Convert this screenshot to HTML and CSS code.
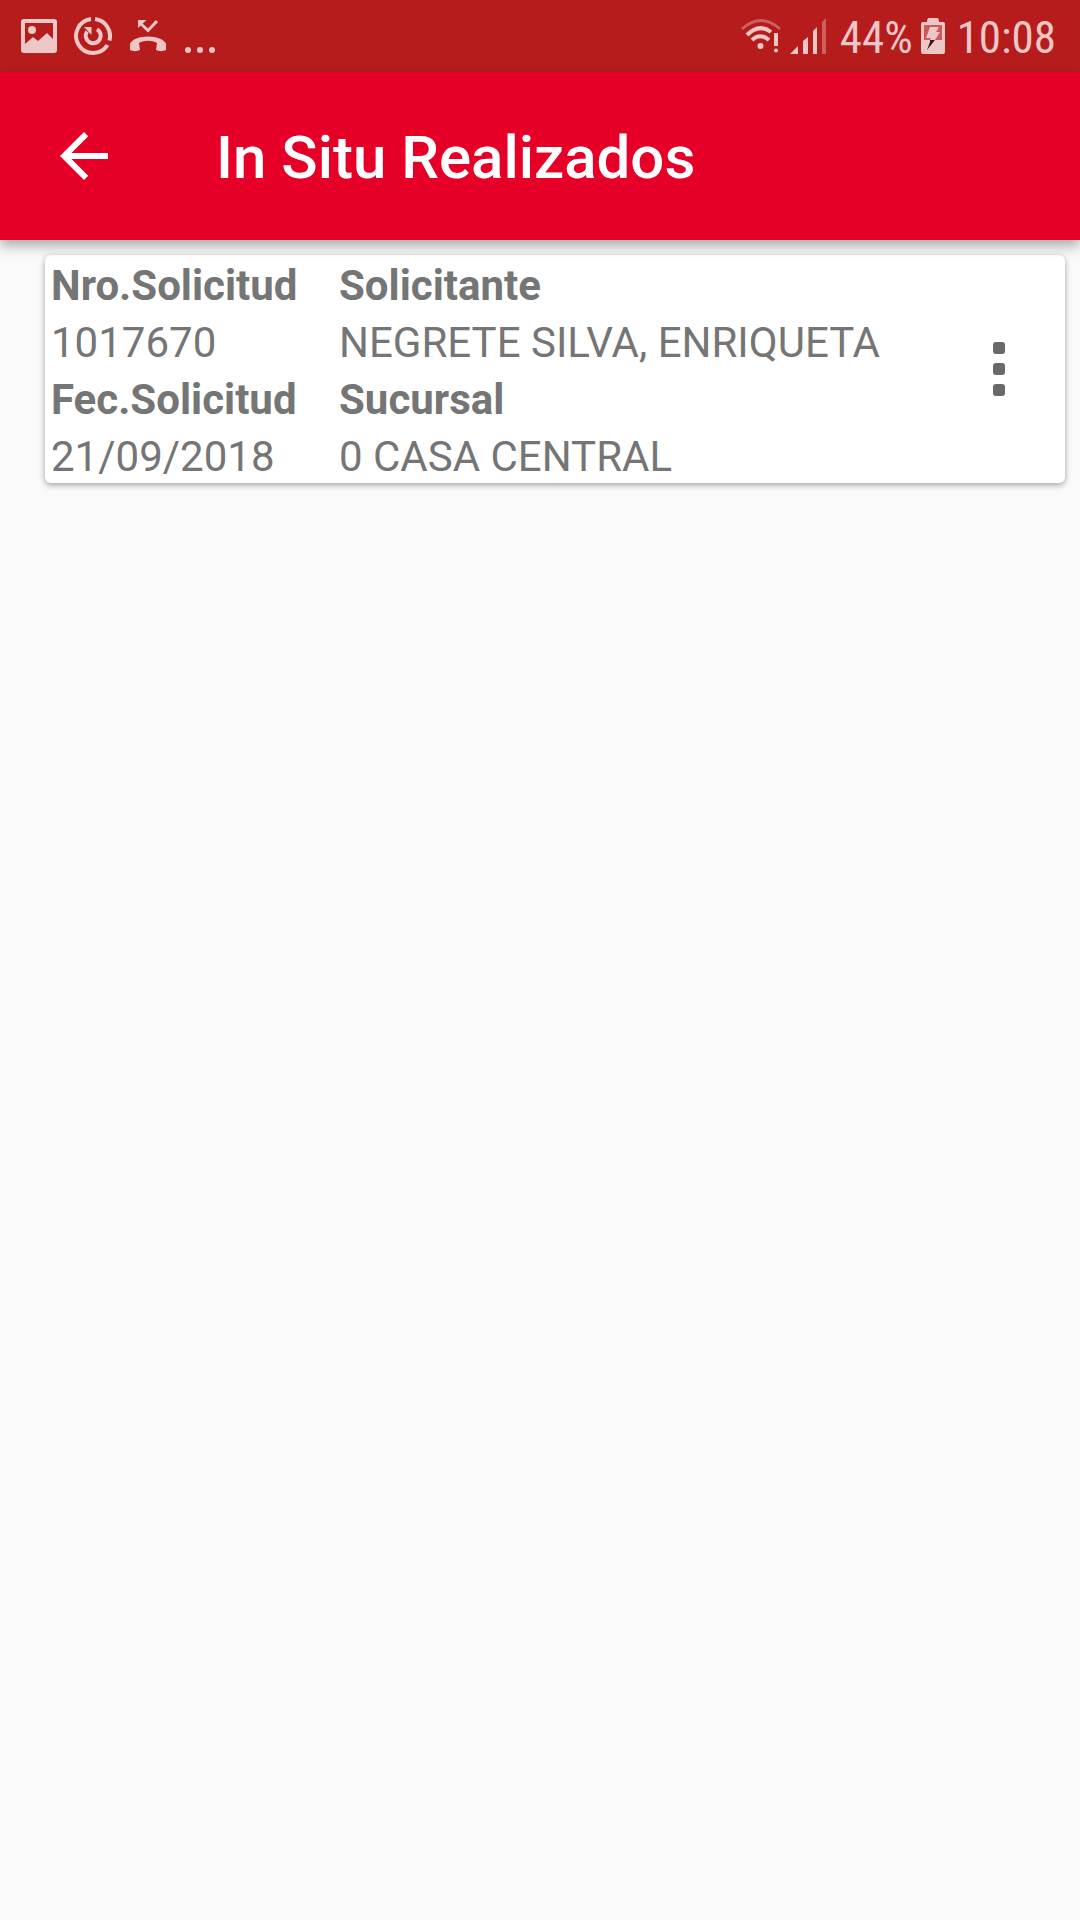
FILE: index.html
```html
<!DOCTYPE html>
<html lang="es">
<head>
<meta charset="utf-8">
<meta name="viewport" content="width=device-width, initial-scale=1">
<title>In Situ Realizados</title>
<link rel="stylesheet" href="styles.css">
</head>
<body>
<div class="status-bar">
  <div class="status-notifications">
    <svg width="36" height="36" viewBox="0 0 36 36" aria-hidden="true">
      <path fill="currentColor" fill-rule="evenodd" d="M3 1H33Q36 1 36 4V32Q36 35 33 35H3Q0 35 0 32V4Q0 1 3 1ZM4 5V26L12 19L17 23L26 15L32 21V5Z"/>
      <circle cx="11" cy="12" r="4" fill="currentColor"/>
    </svg>
    <svg width="38" height="38" viewBox="0 0 38 38" fill="none" stroke="currentColor" stroke-width="4" aria-hidden="true">
      <path d="M17 2.1A17 17 0 1 0 33.5 28"/>
      <path d="M21 2.1A17 17 0 0 1 35.400 23.500"/>
      <path d="M23 12.200A7.500 7.500 0 1 1 13 14.500" />
      <path d="M10 10H17.500V18Z" fill="currentColor" stroke="none"/>
    </svg>
    <svg width="38" height="38" viewBox="0 0 38 38" aria-hidden="true">
      <path d="M1 33V27C2 23 10 19.500 19 19.500S36 23 37 27V33C34 34.500 30 34.500 27 33L28 26C23 23 15 23 10 26L11 33C8 34.500 4 34.500 1 33Z" fill="currentColor"/>
      <path d="M11 6L19 13.500L28 4" fill="none" stroke="currentColor" stroke-width="3"/>
      <path d="M9 3H17.500L9 11Z" fill="currentColor"/>
    </svg>
    <svg width="32" height="36" viewBox="0 0 32 36" fill="currentColor" aria-hidden="true">
      <circle cx="4" cy="32" r="3"/><circle cx="16" cy="32" r="3"/><circle cx="28" cy="32" r="3"/>
    </svg>
  </div>
  <div class="status-system">
    <svg width="42" height="36" viewBox="0 0 42 36" fill="none" stroke="currentColor" aria-hidden="true">
      <path d="M2 11Q21 -6 40 11" stroke-width="3" opacity=".4"/>
      <path d="M7 17Q19 5 31 14" stroke-width="4"/>
      <path d="M12 22Q20 14.500 29 22" stroke-width="4"/>
      <circle cx="20.500" cy="28" r="3" fill="currentColor" stroke="none"/>
      <path d="M36 15V28" stroke-width="4"/>
      <circle cx="36" cy="32.500" r="2" fill="currentColor" stroke="none"/>
    </svg>
    <svg width="36" height="36" viewBox="0 0 36 36" fill="currentColor" aria-hidden="true">
      <path d="M0 36L8 28V36ZM13 23L18 19V36H13ZM23 13L27 9V36H23Z"/>
      <path d="M32 4L36 0V36H32Z" opacity=".4"/>
    </svg>
    <span class="status-text battery-level">44%</span>
    <svg width="24" height="36" viewBox="0 0 24 36" aria-hidden="true">
      <path d="M8 0H16Q18 0 18 4H22Q24 4 24 6V34Q24 36 22 36H2Q0 36 0 34V6Q0 4 2 4H6Q6 0 8 0Z" fill="currentColor"/>
      <path d="M3 7H21V22H3Z" fill="#cc5a5a"/>
      <path d="M9 9H18L15 14H19L14 22H9L10 20H5Z" fill="currentColor"/>
      <path d="M9 22H14L6 32L9 24Z" fill="#451015"/>
    </svg>
    <span class="status-text clock">10:08</span>
  </div>
</div>

<header class="app-bar">
  <button class="back-button" type="button" aria-label="Volver">
    <svg width="72" height="72" viewBox="0 0 24 24" fill="currentColor" aria-hidden="true">
      <path d="M20 11H7.830L13.420 5.410L12 4L4 12L12 20L13.410 18.590L7.830 13H20Z"/>
    </svg>
  </button>
  <h1 class="title">In Situ Realizados</h1>
</header>

<main class="content">
  <article class="card">
    <dl class="fields">
      <div class="field"><dt>Nro.Solicitud</dt><dd>1017670</dd></div>
      <div class="field"><dt>Solicitante</dt><dd>NEGRETE SILVA, ENRIQUETA</dd></div>
      <div class="field"><dt>Fec.Solicitud</dt><dd>21/09/2018</dd></div>
      <div class="field"><dt>Sucursal</dt><dd>0 CASA CENTRAL</dd></div>
    </dl>
    <button class="menu-button" type="button" aria-label="Opciones">
      <svg width="14" height="56" viewBox="0 0 14 56" fill="#696969" aria-hidden="true">
        <rect x="1" y="1" width="12" height="12" rx="3"/>
        <rect x="1" y="22" width="12" height="12" rx="3"/>
        <rect x="1" y="43" width="12" height="12" rx="3"/>
      </svg>
    </button>
  </article>
</main>
</body>
</html>
```

FILE: styles.css
```css
* {
  box-sizing: border-box;
}

body {
  margin: 0;
  min-height: 100vh;
  background: #fafafa;
  color: #757575;
  font-family: Roboto, sans-serif;
}

svg {
  display: block;
  flex: none;
}

button {
  padding: 0;
  border: 0;
  background: none;
  color: inherit;
}

.status-bar {
  display: flex;
  justify-content: space-between;
  align-items: center;
  height: 72px;
  padding: 0 24px 0 21px;
  background: #b71c1c;
  color: #edc6c6;
}

.status-notifications,
.status-system {
  display: flex;
  align-items: center;
}

.status-notifications {
  gap: 17px;
}

.status-system {
  gap: 8px;
}

.status-text {
  padding-top: 4px;
  font-family: "Roboto Condensed", Roboto, sans-serif;
  font-size: 45px;
  line-height: 68px;
}

.battery-level {
  margin-left: 6px;
}

.clock {
  margin-left: 4px;
}

.app-bar {
  position: relative;
  display: flex;
  align-items: center;
  gap: 96px;
  height: 168px;
  padding: 0 48px;
  background: #e60028;
  color: #fff;
  box-shadow: 0 6px 12px rgba(0, 0, 0, 0.32);
}

.title {
  margin: 0;
  padding-top: 4px;
  font-size: 60px;
  font-weight: 500;
  line-height: 72px;
}

.content {
  padding: 15px 15px 15px 45px;
}

.card {
  display: flex;
  align-items: center;
  justify-content: space-between;
  padding: 0 59px 0 6px;
  border-radius: 6px;
  background: #fff;
  box-shadow: 0 2px 6px rgba(0, 0, 0, 0.36);
}

.fields {
  display: grid;
  grid-template-columns: 288px auto;
  margin: 2px 0 -2px;
  font-size: 42px;
  line-height: 57px;
}

.fields dt {
  font-weight: 700;
}

.fields dd {
  margin: 0;
}
```
